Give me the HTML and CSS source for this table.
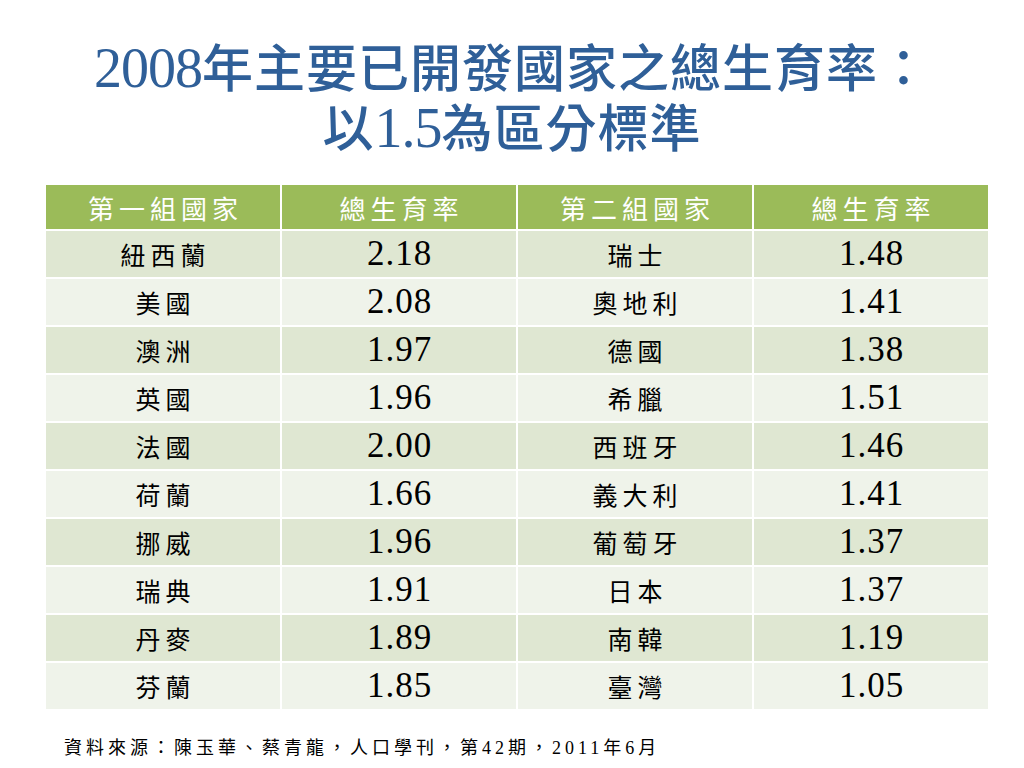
FILE: index.html
```html
<!DOCTYPE html>
<html lang="zh-Hant">
<head>
<meta charset="utf-8">
<title>2008年主要已開發國家之總生育率</title>
<link rel="stylesheet" href="styles.css">
</head>
<body>
<div class="slide">
  <h1 class="title"><span class="tdig">2008</span>年主要已開發國家之總生育率：<br>以<span class="tdig">1.5</span>為區分標準</h1>
  <table class="data">
    <colgroup><col><col><col><col></colgroup>
    <thead>
      <tr><th>第一組國家</th><th>總生育率</th><th>第二組國家</th><th>總生育率</th></tr>
    </thead>
    <tbody>
      <tr><td>紐西蘭</td><td class="num">2.18</td><td>瑞士</td><td class="num">1.48</td></tr>
      <tr><td>美國</td><td class="num">2.08</td><td>奧地利</td><td class="num">1.41</td></tr>
      <tr><td>澳洲</td><td class="num">1.97</td><td>德國</td><td class="num">1.38</td></tr>
      <tr><td>英國</td><td class="num">1.96</td><td>希臘</td><td class="num">1.51</td></tr>
      <tr><td>法國</td><td class="num">2.00</td><td>西班牙</td><td class="num">1.46</td></tr>
      <tr><td>荷蘭</td><td class="num">1.66</td><td>義大利</td><td class="num">1.41</td></tr>
      <tr><td>挪威</td><td class="num">1.96</td><td>葡萄牙</td><td class="num">1.37</td></tr>
      <tr><td>瑞典</td><td class="num">1.91</td><td>日本</td><td class="num">1.37</td></tr>
      <tr><td>丹麥</td><td class="num">1.89</td><td>南韓</td><td class="num">1.19</td></tr>
      <tr><td>芬蘭</td><td class="num">1.85</td><td>臺灣</td><td class="num">1.05</td></tr>
    </tbody>
  </table>
  <p class="source">資料來源：陳玉華、蔡青龍，人口學刊，第42期，2011年6月</p>
</div>
</body>
</html>
```
FILE: styles.css
```css
html, body {
  margin: 0;
  padding: 0;
  background: #ffffff;
}

.slide {
  width: 1024px;
  height: 768px;
  display: flex;
  flex-direction: column;
  align-items: flex-start;
  font-family: "Liberation Serif", "Noto Sans CJK TC", serif;
  color: #000;
}

.title {
  align-self: stretch;
  margin: 40px 0 0 0;
  font-size: 51px;
  line-height: 60px;
  font-weight: 500;
  color: #2f5f98;
  text-align: center;
  letter-spacing: 1px;
}

.title .tdig {
  font-size: 56px;
  line-height: 40px;
  letter-spacing: -1px;
  font-weight: 400;
}

.data {
  margin: 23px 0 0 44px;
  width: 946px;
  border-collapse: collapse;
  table-layout: fixed;
}

.data th,
.data td {
  border: 2px solid #ffffff;
  text-align: center;
  padding: 0;
}

.data th {
  height: 44px;
  background: #9bbb59;
  color: #ffffff;
  font-size: 26px;
  font-weight: 400;
  letter-spacing: 5px;
  text-indent: 5px;
}

.data td {
  height: 46px;
  font-size: 25px;
  letter-spacing: 5px;
  text-indent: 5px;
}

.data td.num {
  font-size: 35px;
  letter-spacing: 1px;
  text-indent: 1px;
}

.data tbody tr:nth-child(odd) td {
  background: #dfe7d2;
}

.data tbody tr:nth-child(even) td {
  background: #eff3ea;
}

.source {
  margin: 25px 0 0 64px;
  font-size: 18px;
  letter-spacing: 4px;
  line-height: 24px;
}
```
